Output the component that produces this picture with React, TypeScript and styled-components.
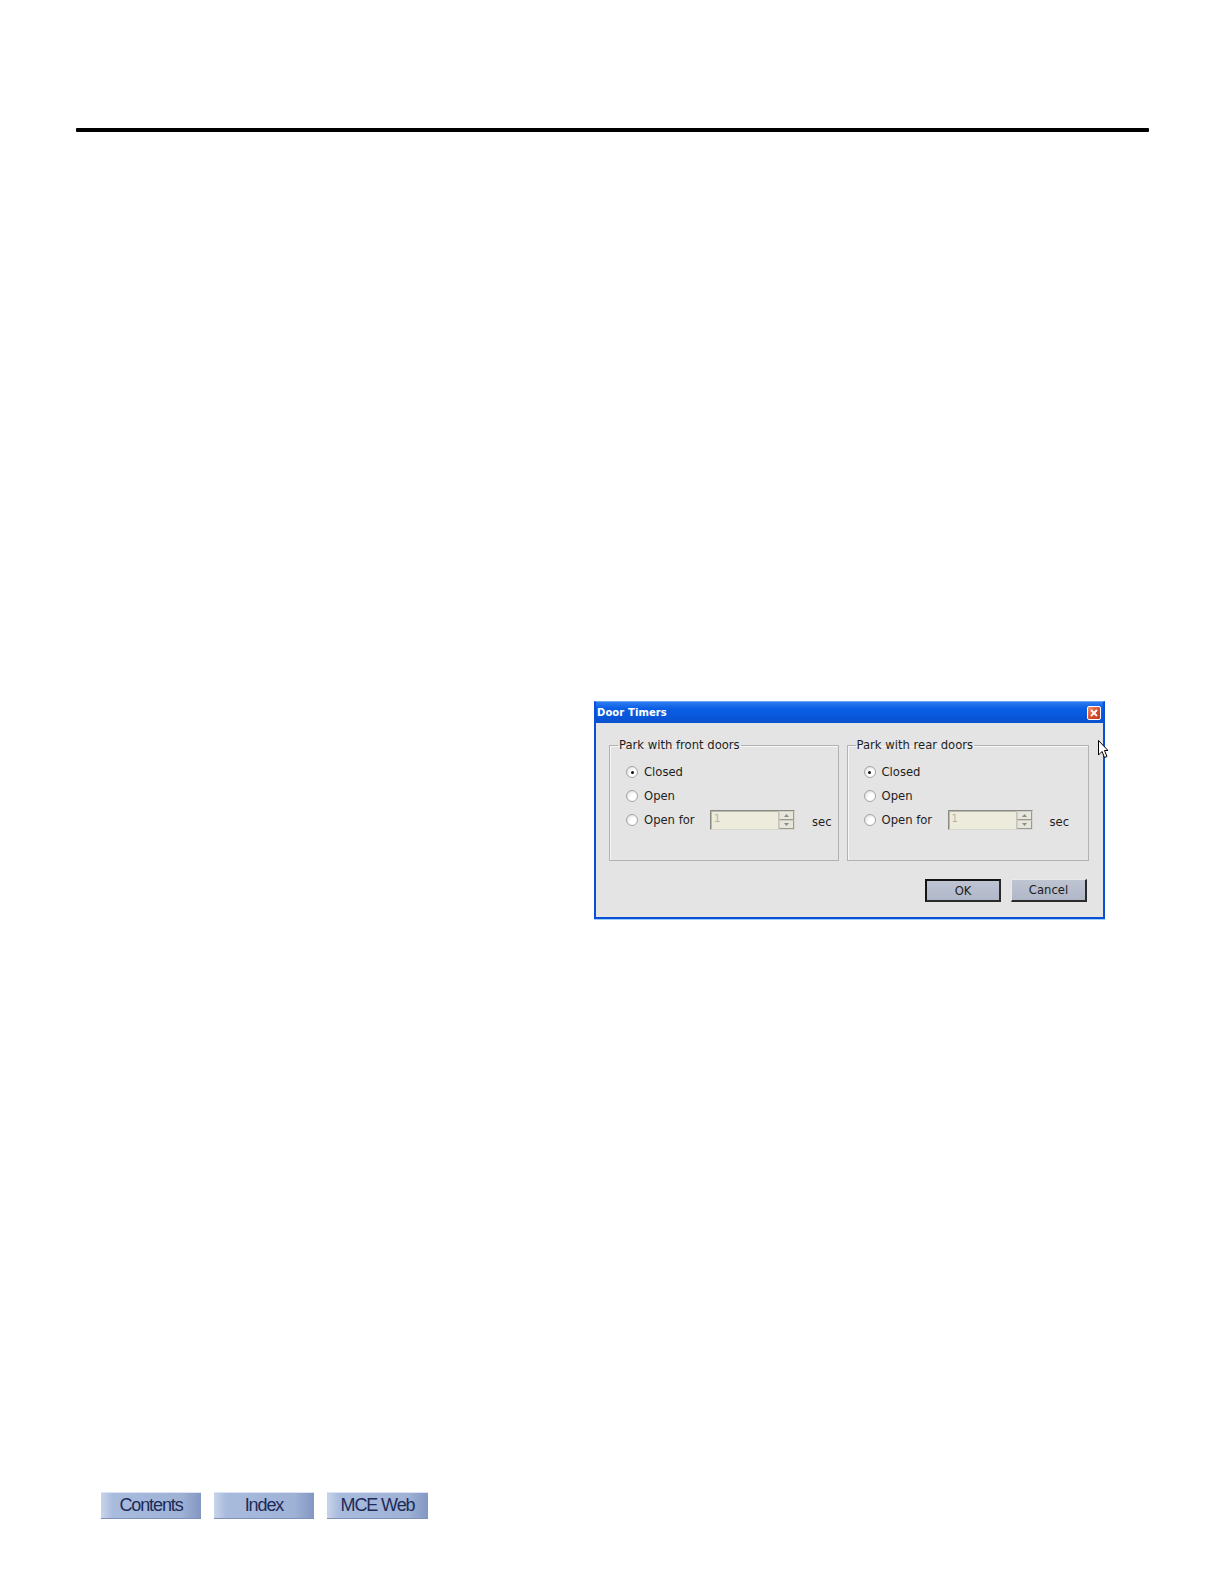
import styled, { createGlobalStyle } from "styled-components";

const GlobalStyle = createGlobalStyle`
  html, body {
    margin: 0;
    padding: 0;
    background: #ffffff;
    overflow: hidden;
  }
  * {
    box-sizing: border-box;
  }
`;

const Page = styled.div`
  height: 1584px;
  display: flex;
  flex-direction: column;
  padding: 128px 0 65px;
`;

const Rule = styled.div`
  margin: 0 75px 0 76px;
  height: 4px;
  background: #000;
  border-radius: 1px;
`;

const Content = styled.div`
  padding: 569px 0 0 594px;
`;

const Window = styled.div`
  position: relative;
  width: 511px;
  height: 218px;
  border: 2px solid #0a4fd8;
  border-top: 1px solid #6aa6f8;
  box-shadow: 0 1px 0 #9fd0f6;
  background: #e4e4e4;
  display: flex;
  flex-direction: column;
`;

const TitleBar = styled.div`
  height: 21px;
  display: flex;
  align-items: center;
  justify-content: space-between;
  padding: 0 2px 0 1px;
  background: linear-gradient(#2f7cf0, #0b5fe4 30%, #0757dc 70%, #0a51cc);
`;

const Title = styled.span`
  font-family: "DejaVu Sans", Verdana, sans-serif;
  font-weight: bold;
  font-size: 10px;
  color: #ffffff;
  letter-spacing: 0.1px;
`;

const CloseButton = styled.div`
  width: 14px;
  height: 14px;
  border: 1px solid #ffffff;
  border-radius: 2px;
  background: linear-gradient(135deg, #f0906a, #d8482a 60%, #c23c20);
  display: flex;
  align-items: center;
  justify-content: center;
`;

const Body = styled.div`
  flex: 1;
  padding: 16px 14px 0 13px;
  display: flex;
  flex-direction: column;
`;

const Groups = styled.div`
  display: flex;
  gap: 8px;
`;

const Group = styled.fieldset<{ $width: number }>`
  width: ${(p) => p.$width}px;
  height: 122px;
  margin: 0;
  padding: 10px 0 0 16px;
  border: 1px solid #b2b2b2;
  box-shadow: inset 1px 1px 0 #f6f6f6;
  display: flex;
  flex-direction: column;
  gap: 3px;
  font-family: "DejaVu Sans", Verdana, sans-serif;
  font-size: 11.6px;
  color: #1e1e1e;
`;

const Legend = styled.legend`
  margin-left: -8px;
  padding: 0 1px;
  font-size: 11.6px;
  line-height: 13px;
  color: #1e1e1e;
`;

const Row = styled.div`
  height: 20.8px;
  display: flex;
  align-items: center;
`;

const Radio = styled.span<{ $checked?: boolean }>`
  position: relative;
  width: 12px;
  height: 12px;
  border-radius: 50%;
  border: 1px solid #a4a4a4;
  background: radial-gradient(circle at 65% 65%, #ffffff 35%, #d4d4d4 100%);
  margin-right: 6px;
  flex-shrink: 0;
  &::after {
    content: "";
    display: ${(p) => (p.$checked ? "block" : "none")};
    position: absolute;
    left: 3.5px;
    top: 3.5px;
    width: 3px;
    height: 3px;
    border-radius: 50%;
    background: #111;
  }
`;

const Label = styled.span<{ $width?: number }>`
  width: ${(p) => (p.$width ? `${p.$width}px` : "auto")};
  flex-shrink: 0;
`;

const Spinner = styled.div`
  width: 85px;
  height: 20px;
  display: flex;
  border: 1px solid #8a8a80;
  border-right-color: #d8d8d0;
  border-bottom-color: #d8d8d0;
  background: #ecebdc;
  box-shadow: inset 1px 1px 0 #b8b8ae;
`;

const SpinValue = styled.span`
  flex: 1;
  padding: 2px 0 0 3px;
  color: #b4b4a4;
  font-size: 10px;
`;

const SpinButtons = styled.div`
  width: 16px;
  display: flex;
  flex-direction: column;
  border-left: 1px solid #c4c4bc;
`;

const SpinHalf = styled.div`
  flex: 1;
  display: flex;
  align-items: center;
  justify-content: center;
  background: #e6e6dc;
  border: 1px solid #cfcfc6;
  border-right-color: #9a9a90;
  border-bottom-color: #9a9a90;
`;

const Unit = styled.span`
  margin: 5px 0 0 17px;
`;

const Actions = styled.div`
  display: flex;
  justify-content: flex-end;
  gap: 10px;
  padding: 18px 2px 0 0;
`;

const DialogButton = styled.button<{ $default?: boolean }>`
  width: 76px;
  height: 23px;
  padding: 0;
  font-family: "DejaVu Sans", Verdana, sans-serif;
  font-size: 11.6px;
  color: #1c1c1c;
  background: linear-gradient(#bec4d2, #b0b7c8);
  border: ${(p) => (p.$default ? "2px solid #141414" : "1px solid #e8eaf0")};
  border-right-color: #2a2a2a;
  border-bottom-color: #2a2a2a;
  ${(p) => (p.$default ? "" : "border-right-width: 2px; border-bottom-width: 2px;")}
`;

const Cursor = styled.svg`
  position: absolute;
  right: -5px;
  top: 38px;
`;

const Footer = styled.div`
  margin-top: auto;
  padding-left: 101px;
  display: flex;
  gap: 13px;
`;

const NavButton = styled.div<{ $width: number }>`
  width: ${(p) => p.$width}px;
  height: 27px;
  display: flex;
  align-items: center;
  justify-content: center;
  background: linear-gradient(90deg, #c8d4ea 0%, #a9bbdd 12%, #9fb2d6 80%, #8297c2 100%);
  border-top: 1px solid #dbe4f4;
  border-bottom: 1px solid #7f91bb;
  font-family: "Liberation Sans", Arial, sans-serif;
  font-size: 18px;
  letter-spacing: -1.1px;
  color: #1d2b57;
`;

type RowProps = { checked?: boolean; label: string };

const Choice = ({ checked, label }: RowProps) => (
  <Row>
    <Radio $checked={checked} />
    <Label>{label}</Label>
  </Row>
);

const Arrow = ({ up }: { up?: boolean }) => (
  <svg width="5" height="3" viewBox="0 0 5 3">
    <path d={up ? "M0 3 L2.5 0 L5 3 Z" : "M0 0 L2.5 3 L5 0 Z"} fill="#8c8c84" />
  </svg>
);

const DoorGroup = ({ title, width }: { title: string; width: number }) => (
  <Group $width={width}>
    <Legend>{title}</Legend>
    <Choice checked label="Closed" />
    <Choice label="Open" />
    <Row>
      <Radio />
      <Label $width={66}>Open for</Label>
      <Spinner>
        <SpinValue>1</SpinValue>
        <SpinButtons>
          <SpinHalf>
            <Arrow up />
          </SpinHalf>
          <SpinHalf>
            <Arrow />
          </SpinHalf>
        </SpinButtons>
      </Spinner>
      <Unit>sec</Unit>
    </Row>
  </Group>
);

const App = () => {
  return (
    <>
      <GlobalStyle />
      <Page>
        <Rule />
        <Content>
          <Window>
            <TitleBar>
              <Title>Door Timers</Title>
              <CloseButton>
                <svg width="8" height="8" viewBox="0 0 8 8">
                  <path d="M1 1 L7 7 M7 1 L1 7" stroke="#fff" strokeWidth="1.8" />
                </svg>
              </CloseButton>
            </TitleBar>
            <Body>
              <Groups>
                <DoorGroup title="Park with front doors" width={230} />
                <DoorGroup title="Park with rear doors" width={243} />
              </Groups>
              <Actions>
                <DialogButton $default>OK</DialogButton>
                <DialogButton>Cancel</DialogButton>
              </Actions>
            </Body>
            <Cursor width="10" height="19" viewBox="0 0 10 19">
              <path d="M0.5 0.5 L0.5 15 L4 11.5 L6.5 17.5 L9 16.5 L6.5 10.5 L10 10.5 Z" fill="#fff" stroke="#000" strokeWidth="1" />
            </Cursor>
          </Window>
        </Content>
        <Footer>
          <NavButton $width={100}>Contents</NavButton>
          <NavButton $width={100}>Index</NavButton>
          <NavButton $width={101}>MCE Web</NavButton>
        </Footer>
      </Page>
    </>
  );
};

export default App;
